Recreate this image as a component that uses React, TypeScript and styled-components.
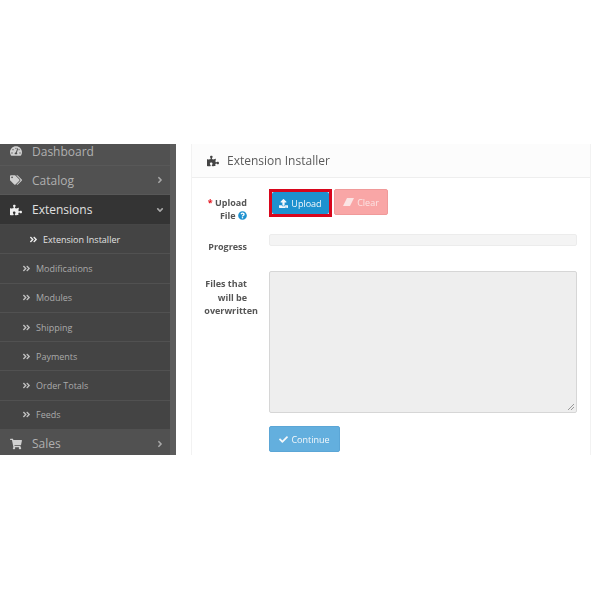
import React from "react";
import styled, { createGlobalStyle } from "styled-components";
import {
  FaTachometerAlt,
  FaTags,
  FaPuzzlePiece,
  FaAngleRight,
  FaAngleDown,
  FaAngleDoubleRight,
  FaShoppingCart,
  FaUpload,
  FaCheck,
  FaQuestionCircle,
} from "react-icons/fa";

const Global = createGlobalStyle`
  html, body { margin: 0; padding: 0; background: #fff; }
  body { font-family: "Open Sans", "Liberation Sans", sans-serif; }
`;

const Page = styled.div`
  width: 600px;
  height: 600px;
  padding-top: 144px;
  box-sizing: border-box;
  background: #fff;
  overflow: hidden;
`;

const Band = styled.div`
  height: 311px;
  display: flex;
  overflow: hidden;
  filter: blur(0.45px);
`;

const Sidebar = styled.nav`
  width: 170px;
  flex: none;
  background: #444;
  border-right: 6px solid #5c5c5c;
  display: flex;
  flex-direction: column;
`;

const TopRow = styled.div<{ $active?: boolean; $height: number; $lift?: number }>`
  height: ${(p) => p.$height}px;
  flex: none;
  box-sizing: border-box;
  display: flex;
  align-items: center;
  padding: 0 5px ${(p) => p.$lift ?? 0}px 10px;
  background: ${(p) => (p.$active ? "#343434" : "#515151")};
  border-bottom: 1px solid ${(p) => (p.$active ? "#464646" : "#585858")};
  color: ${(p) => (p.$active ? "#e0e0e0" : "#b0b0b0")};
  font-size: 12px;
`;

const TopIcon = styled.span<{ $active?: boolean }>`
  width: 22px;
  flex: none;
  display: flex;
  align-items: center;
  font-size: 12px;
  color: ${(p) => (p.$active ? "#f0f0f0" : "#d0d0d0")};
`;

const TopLabel = styled.span`
  flex: 1;
`;

const Caret = styled.span`
  display: flex;
  font-size: 10px;
  color: #a8a8a8;
`;

const SubRow = styled.div<{ $current?: boolean }>`
  height: 29.3px;
  flex: none;
  box-sizing: border-box;
  display: flex;
  align-items: center;
  gap: 5px;
  padding-left: ${(p) => (p.$current ? 29 : 22)}px;
  border-bottom: 1px solid #515151;
  color: ${(p) => (p.$current ? "#e2e2e2" : "#aaa")};
  font-size: 9px;
  svg {
    font-size: 9px;
    color: ${(p) => (p.$current ? "#eee" : "#c0c0c0")};
  }
`;

const Panel = styled.section`
  margin-left: 15px;
  width: 400px;
  flex: none;
  box-sizing: border-box;
  border: 1px solid #f2f2f2;
  border-top: 0;
  border-bottom: 0;
  display: flex;
  flex-direction: column;
`;

const PanelHead = styled.header`
  height: 34px;
  flex: none;
  box-sizing: border-box;
  background: #fcfcfc;
  border-bottom: 1px solid #eee;
  display: flex;
  align-items: center;
  gap: 8px;
  padding-left: 15px;
  color: #5a5a5a;
  font-size: 12px;
  svg {
    font-size: 12px;
    color: #444;
  }
`;

const Form = styled.div`
  display: flex;
  flex-direction: column;
  padding-top: 11px;
`;

const Field = styled.div<{ $height: number }>`
  height: ${(p) => p.$height}px;
  display: grid;
  grid-template-columns: 66px 308px;
  column-gap: 11px;
`;

const Label = styled.div<{ $top: number; $line?: number }>`
  padding: ${(p) => p.$top}px 11px 0 0;
  text-align: right;
  font-size: 9px;
  font-weight: 700;
  line-height: ${(p) => p.$line ?? 13.5}px;
  color: #555;
`;

const LongWord = styled.span`
  display: block;
  margin-right: -11px;
`;

const Star = styled.span`
  color: #e3141e;
`;

const Help = styled(FaQuestionCircle)`
  color: #1e91cf;
  font-size: 9px;
  vertical-align: -1px;
`;

const Buttons = styled.div`
  display: flex;
  gap: 2px;
  align-items: flex-start;
`;

const Highlight = styled.div`
  box-sizing: border-box;
  height: 28px;
  border: 3px solid #d8061c;
  display: flex;
`;

const Button = styled.div<{ $bg: string; $w: number; $h: number; $color?: string; $border?: string }>`
  width: ${(p) => p.$w}px;
  height: ${(p) => p.$h}px;
  box-sizing: border-box;
  background: ${(p) => p.$bg};
  color: ${(p) => p.$color ?? "#f4f8fb"};
  border: ${(p) => (p.$border ? `1px solid ${p.$border}` : "0")};
  border-radius: 2px;
  display: flex;
  align-items: center;
  justify-content: center;
  gap: 3px;
  font-size: 9px;
  svg {
    font-size: 9px;
  }
`;

const Progress = styled.div`
  height: 12px;
  box-sizing: border-box;
  background: #f4f4f4;
  border: 1px solid #ececec;
  border-radius: 2px;
`;

const TextBox = styled.div`
  position: relative;
  height: 142px;
  box-sizing: border-box;
  background: #eee;
  border: 1px solid #d6d6d6;
  border-radius: 2px;
`;

const Grip = styled.svg`
  position: absolute;
  right: 1px;
  bottom: 1px;
`;

const subs = ["Modifications", "Modules", "Shipping", "Payments", "Order Totals", "Feeds"];

export default function App() {
  return (
    <Page>
      <Global />
      <Band>
        <Sidebar>
          <TopRow $height={22} $lift={7}>
            <TopIcon><FaTachometerAlt /></TopIcon>
            <TopLabel>Dashboard</TopLabel>
          </TopRow>
          <TopRow $height={29}>
            <TopIcon><FaTags /></TopIcon>
            <TopLabel>Catalog</TopLabel>
            <Caret><FaAngleRight /></Caret>
          </TopRow>
          <TopRow $height={30} $active>
            <TopIcon $active><FaPuzzlePiece /></TopIcon>
            <TopLabel>Extensions</TopLabel>
            <Caret><FaAngleDown /></Caret>
          </TopRow>
          <SubRow $current>
            <FaAngleDoubleRight />
            <span>Extension Installer</span>
          </SubRow>
          {subs.map((s) => (
            <SubRow key={s}>
              <FaAngleDoubleRight />
              <span>{s}</span>
            </SubRow>
          ))}
          <TopRow $height={28}>
            <TopIcon><FaShoppingCart /></TopIcon>
            <TopLabel>Sales</TopLabel>
            <Caret><FaAngleRight /></Caret>
          </TopRow>
        </Sidebar>
        <Panel>
          <PanelHead>
            <FaPuzzlePiece />
            <span>Extension Installer</span>
          </PanelHead>
          <Form>
            <Field $height={45}>
              <Label $top={7} $line={13}>
                <Star>*</Star> Upload
                <br />
                File <Help />
              </Label>
              <Buttons>
                <Highlight>
                  <Button $bg="#1e91cf" $w={57} $h={22}>
                    <FaUpload />
                    Upload
                  </Button>
                </Highlight>
                <Button $bg="#f9a6a6" $w={54} $h={26} $color="#fbe4e4" $border="#f09a9a">
                  <svg width="11" height="8" viewBox="0 0 11 8">
                    <path d="M4 0H11L7 8H0Z" fill="#fbe4e4" />
                  </svg>
                  Clear
                </Button>
              </Buttons>
            </Field>
            <Field $height={37}>
              <Label $top={6}>Progress</Label>
              <Progress />
            </Field>
            <Field $height={155}>
              <Label $top={6}>
                Files that
                <br />
                will be
                <br />
                <LongWord>overwritten</LongWord>
              </Label>
              <TextBox>
                <Grip width="9" height="9" viewBox="0 0 9 9">
                  <path d="M8 2 2 8M8 5 5 8" stroke="#999" strokeWidth="1" fill="none" />
                </Grip>
              </TextBox>
            </Field>
            <Field $height={30}>
              <span />
              <Button $bg="#63afde" $w={71} $h={26} $border="#5ba6d6">
                <FaCheck />
                Continue
              </Button>
            </Field>
          </Form>
        </Panel>
      </Band>
    </Page>
  );
}
